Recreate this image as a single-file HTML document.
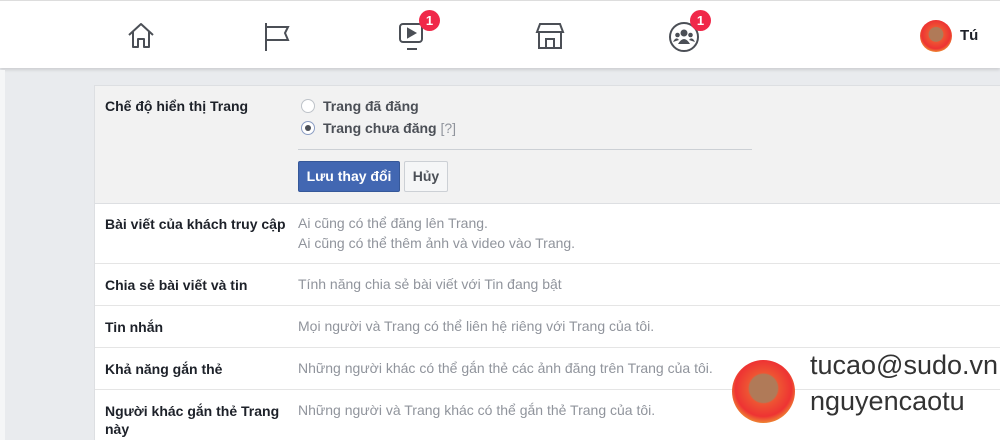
<!DOCTYPE html>
<html><head><meta charset="utf-8"><style>
*{margin:0;padding:0;box-sizing:border-box}
html,body{width:1000px;height:440px;overflow:hidden}
body{background:#e9ebee;font-family:"Liberation Sans","Noto Sans CJK SC",sans-serif;position:relative}
.top{position:absolute;left:0;top:0;width:1000px;height:68px;background:#fff;border-top:1px solid #ddd;box-shadow:0 2px 3px rgba(0,0,0,.12)}
.strip{position:absolute;left:0;top:70px;width:5px;height:370px;background:#f5f6f7}
.ic{position:absolute;top:20px}
.badge{position:absolute;width:21px;height:21px;border-radius:50%;background:#f02849;color:#fff;font-size:13px;font-weight:bold;text-align:center;line-height:21px}
.panel{position:absolute;left:94px;top:85px;width:906px;height:355px;background:#fff;border-left:1px solid #dddfe2;border-top:1px solid #dddfe2}
.row{position:absolute;left:0;width:906px;border-bottom:1px solid #e5e5e5}
.lab{position:absolute;left:10px;font-size:14px;font-weight:bold;color:#1d2129;line-height:18px}
.val{position:absolute;left:203px;font-size:14px;color:#90949c;line-height:20px}
.rad{position:absolute;width:14px;height:14px;border-radius:50%;border:1px solid #bec3c9;background:#fff}
</style></head><body>
<div class="top">
<svg class="ic" style="left:126px" width="30" height="30" viewBox="0 0 30 30" fill="none" stroke="#4b4f56" stroke-width="2" stroke-linejoin="round"><path d="M3 14 L15 3 L27 14 M7 11 V26 H12 V18 H18 V26 H23 V11"/></svg>
<svg class="ic" style="left:262px" width="30" height="32" viewBox="0 0 30 32" fill="none" stroke="#4b4f56" stroke-width="2"><path d="M4 2 V30 M4 6 H26 L23 12 L26 19 H4"/></svg>
<svg class="ic" style="left:398px" width="30" height="30" viewBox="0 0 30 30" fill="none" stroke="#4b4f56" stroke-width="2"><rect x="2" y="3" width="22" height="18" rx="3"/><path d="M9 28 H19"/><path d="M10 8 L17 12 L10 16Z" fill="#4b4f56"/></svg>
<div class="badge" style="left:419px;top:9px">1</div>
<svg class="ic" style="left:535px" width="30" height="30" viewBox="0 0 30 30" fill="none" stroke="#4b4f56" stroke-width="2"><path d="M5 3 H25 L28 11 H2 Z M4 11 V27 H26 V11 M11 27 V18 H19 V27"/></svg>
<svg class="ic" style="left:668px" width="32" height="32" viewBox="0 0 32 32"><circle cx="16" cy="16" r="14" fill="none" stroke="#4b4f56" stroke-width="2"/><circle cx="16" cy="12" r="3.5" fill="#4b4f56"/><circle cx="9.5" cy="14" r="2.3" fill="#4b4f56"/><circle cx="22.5" cy="14" r="2.3" fill="#4b4f56"/><path d="M10 23 Q16 13 22 23Z" fill="#4b4f56"/><path d="M5 21 Q8 15 11 19 M27 21 Q24 15 21 19" fill="#4b4f56"/></svg>
<div class="badge" style="left:690px;top:9px">1</div>
<div style="position:absolute;left:920px;top:19px;width:32px;height:32px;border-radius:50%;background:radial-gradient(circle at 50% 45%,#b07a58 30%,#e53 32%,#e33 60%,#ee3 90%)"></div>
<div style="position:absolute;left:960px;top:26px;font-size:15px;font-weight:bold;color:#1d2129">Tú</div>
</div>
<div class="strip"></div>
<div class="panel">
<div class="row" style="top:0;height:118px;background:#f2f2f2;border-bottom:1px solid #dddfe2">
<div class="lab" style="top:11px">Chế độ hiển thị Trang</div>
<div class="rad" style="left:206px;top:13px"></div>
<div class="val" style="left:228px;top:10px;color:#4b4f56;font-weight:bold">Trang đã đăng</div>
<div class="rad" style="left:206px;top:35px;border-color:#8b9dc3"><div style="width:6px;height:6px;border-radius:50%;background:#4b4f56;margin:3px"></div></div>
<div class="val" style="left:228px;top:32px;color:#4b4f56;font-weight:bold">Trang chưa đăng <span style="font-weight:normal;color:#90949c">[?]</span></div>
<div style="position:absolute;left:203px;top:63px;width:454px;height:1px;background:#ccd0d5"></div>
<div style="position:absolute;left:203px;top:75px;width:102px;height:31px;background:#4267b2;border:1px solid #365899;border-radius:2px;color:#fff;font-size:14px;font-weight:bold;text-align:center;line-height:29px">Lưu thay đổi</div>
<div style="position:absolute;left:309px;top:75px;width:44px;height:31px;background:#f5f6f7;border:1px solid #ccd0d5;border-radius:2px;color:#4b4f56;font-size:14px;font-weight:bold;text-align:center;line-height:29px">Hủy</div>
</div>
<div class="row" style="top:118px;height:60px">
<div class="lab" style="top:11px">Bài viết của khách truy cập</div>
<div class="val" style="top:9px">Ai cũng có thể đăng lên Trang.<br>Ai cũng có thể thêm ảnh và video vào Trang.</div>
</div>
<div class="row" style="top:178px;height:42px">
<div class="lab" style="top:12px">Chia sẻ bài viết và tin</div>
<div class="val" style="top:10px">Tính năng chia sẻ bài viết với Tin đang bật</div>
</div>
<div class="row" style="top:220px;height:42px">
<div class="lab" style="top:12px">Tin nhắn</div>
<div class="val" style="top:10px">Mọi người và Trang có thể liên hệ riêng với Trang của tôi.</div>
</div>
<div class="row" style="top:262px;height:42px">
<div class="lab" style="top:12px">Khả năng gắn thẻ</div>
<div class="val" style="top:10px">Những người khác có thể gắn thẻ các ảnh đăng trên Trang của tôi.</div>
</div>
<div class="row" style="top:304px;height:60px;border:none">
<div class="lab" style="top:12px">Người khác gắn thẻ Trang<br>này</div>
<div class="val" style="top:10px">Những người và Trang khác có thể gắn thẻ Trang của tôi.</div>
</div>
</div>
<div style="position:absolute;left:732px;top:360px;width:63px;height:63px;border-radius:50%;background:radial-gradient(circle at 50% 45%,#b07a58 30%,#e53 33%,#e33 60%,#ee3 92%)"></div>
<div style="position:absolute;left:810px;top:347px;font-size:27px;color:#333;line-height:36px">tucao@sudo.vn<br>nguyencaotu</div>
</body></html>
